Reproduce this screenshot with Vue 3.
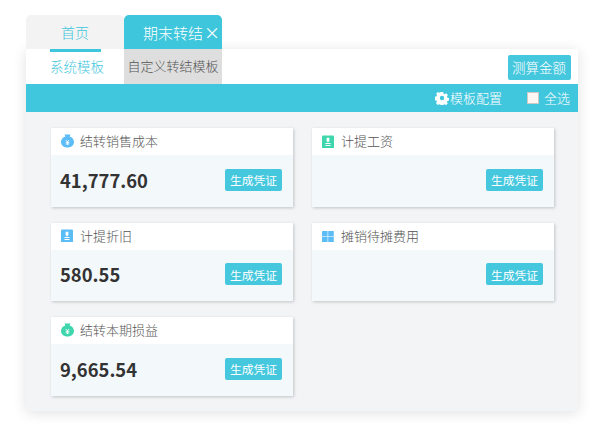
<script setup>
const cards = [
  { title: '结转销售成本', amount: '41,777.60', icon: 'bag', color: '#5cbcf5' },
  { title: '计提工资', amount: '', icon: 'book', color: '#3fd6ae' },
  { title: '计提折旧', amount: '580.55', icon: 'book', color: '#5cbcf5' },
  { title: '摊销待摊费用', amount: '', icon: 'grid', color: '#5cbcf5' },
  { title: '结转本期损益', amount: '9,665.54', icon: 'bag', color: '#3fd6ae' }
]
</script>

<template>
  <div class="page">
    <div class="tabs">
      <div class="tab home">首页</div>
      <div class="tab active">期末转结<span class="close">×</span></div>
    </div>
    <div class="panel">
      <div class="subbar">
        <div class="sub current">系统模板</div>
        <div class="sub custom">自定义转结模板</div>
        <button class="calc">测算金额</button>
      </div>
      <div class="toolbar">
        <svg class="gear" viewBox="0 0 16 16" width="14" height="14">
          <path fill="#fff" fill-rule="evenodd" d="M6.6 1h2.8l.4 2 1.2.6 1.800-1 1.900 2-1 1.800.5 1.200 1.800.5v2.700l-1.900.5-.5 1.200 1 1.700-2 1.900-1.700-1-1.200.5-.5 1.800H6.600l-.5-1.900-1.200-.5-1.700 1-2-1.900 1-1.700-.5-1.200-1.700-.5V6.600l1.800-.5.5-1.200-1-1.800 1.900-2 1.800 1 1.200-.6zM8 5.500a2.500 2.500 0 1 0 0 5 2.500 2.500 0 0 0 0-5z" />
        </svg>
        <span class="config">模板配置</span>
        <span class="box"></span>
        <span class="all">全选</span>
      </div>
      <div class="grid">
        <div v-for="c in cards" :key="c.title" class="card">
          <div class="head">
            <svg class="icon" viewBox="0 0 14 14" width="14" height="14">
              <template v-if="c.icon === 'bag'">
                <path :fill="c.color" d="M3.500 .6h6l-.9 2c2.500.8 4.400 2.900 4.400 5.500 0 3.400-2.900 5.500-6.500 5.500S0 11.500 0 8.100c0-2.600 1.900-4.700 4.400-5.500z" />
                <path fill="none" stroke="#fff" stroke-width=".9" d="M4.800 6 6.500 7.800 8.200 6M4.700 8.300h3.600M4.700 9.900h3.600M6.500 7.800v3.200" />
              </template>
              <template v-else-if="c.icon === 'book'">
                <rect x="0" y="1.500" width="12" height="13" rx="1" :fill="c.color" />
                <path fill="none" stroke="#fff" stroke-width="1" d="M3.500 9.500h5M3.500 11.500h5" />
                <path fill="#fff" d="M4.600 3.800h2.800v3.100l-1.400 1.500-1.400-1.500z" />
              </template>
              <template v-else>
                <rect x="0" y="3" width="5.600" height="5.200" rx=".5" :fill="c.color" />
                <rect x="6.200" y="3" width="5.600" height="5.200" rx=".5" :fill="c.color" />
                <rect x="0" y="8.800" width="5.600" height="5.200" rx=".5" :fill="c.color" />
                <rect x="6.200" y="8.800" width="5.600" height="5.200" rx=".5" :fill="c.color" />
              </template>
            </svg>
            <span class="title">{{ c.title }}</span>
          </div>
          <div class="body">
            <span class="amount">{{ c.amount }}</span>
            <button class="gen">生成凭证</button>
          </div>
        </div>
      </div>
    </div>
  </div>
</template>

<style>
html, body { margin: 0; background: #fff; }
</style>

<style scoped>
.page {
  width: 604px;
  height: 433px;
  box-sizing: border-box;
  padding: 15px 26px 0;
  font-family: "Noto Sans CJK SC", "Noto Sans", sans-serif;
  font-weight: 300;
  overflow: hidden;
}
.tabs { display: flex; height: 34px; }
.tab {
  width: 98px;
  display: flex;
  align-items: center;
  font-size: 14px;
  border-radius: 5px 5px 0 0;
  white-space: nowrap;
}
.home { background: #f3f3f3; color: #3fc5dc; justify-content: center; }
.active {
  background: #3dc6dc;
  color: #fff;
  font-size: 15px;
  padding-left: 19px;
  box-sizing: border-box;
}
.close { font-size: 16px; font-weight: 400; line-height: 20px; margin-left: 1px; }
.panel {
  width: 552px;
  height: 362px;
  background: #f2f4f6;
  box-shadow: 0 2px 14px rgba(0, 0, 0, 0.12);
  border-radius: 0 0 3px 3px;
}
.subbar {
  height: 35px;
  background: #fff;
  display: flex;
  align-items: stretch;
  padding-right: 7.500px;
}
.sub {
  display: flex;
  align-items: center;
  justify-content: center;
  width: 98px;
  box-sizing: border-box;
  white-space: nowrap;
  padding-bottom: 2px;
}
.current { color: #45c7de; font-size: 13.500px; position: relative; padding-left: 4px; }
.current::before {
  content: "";
  position: absolute;
  left: 24px;
  top: 0;
  width: 51px;
  height: 3px;
  background: #3dc6dc;
}
.custom { background: #dedede; color: #555; font-size: 13px; }
.calc {
  margin: 6px 0 4px auto;
  width: 63px;
  padding: 0 0 2px;
  border: 0;
  border-radius: 2px;
  background: #45c7de;
  color: #fff;
  font: inherit;
  font-size: 13.500px;
}
.toolbar {
  height: 28px;
  background: #40c6dd;
  display: flex;
  align-items: center;
  color: #fff;
  font-size: 13px;
  padding-right: 8px;
  justify-content: flex-end;
}
.gear { margin-right: 1px; }
.config { margin: 0 25px 2px 0; }
.all { margin-bottom: 2px; }
.box {
  width: 10px;
  height: 10px;
  background: #fdf7f3;
  border: 1px solid #cfc9c6;
  margin-right: 5px;
}
.grid {
  display: grid;
  grid-template-columns: 242px 242px;
  grid-auto-rows: 78.500px;
  column-gap: 19px;
  row-gap: 16px;
  padding: 16px 25px 0;
}
.card {
  display: flex;
  flex-direction: column;
  background: #f3f8fb;
  box-shadow: 1px 1px 3px rgba(0, 0, 0, 0.2);
}
.head {
  height: 27px;
  box-sizing: border-box;
  padding: 0 0 2px 10px;
  background: #fff;
  display: flex;
  align-items: center;
  color: #555;
  font-size: 13px;
}
.icon { margin-right: 5px; }
.body {
  flex: 1;
  display: flex;
  align-items: center;
  justify-content: space-between;
  padding: 0 11px 2px 9px;
}
.amount { font-size: 18.400px; font-weight: 700; color: #333; }
.gen {
  margin-left: auto;
  width: 57px;
  height: 22px;
  padding: 0;
  border: 0;
  border-radius: 2px;
  background: #45c7de;
  color: #fff;
  font: inherit;
  font-weight: 400;
  font-size: 11.800px;
}
</style>
